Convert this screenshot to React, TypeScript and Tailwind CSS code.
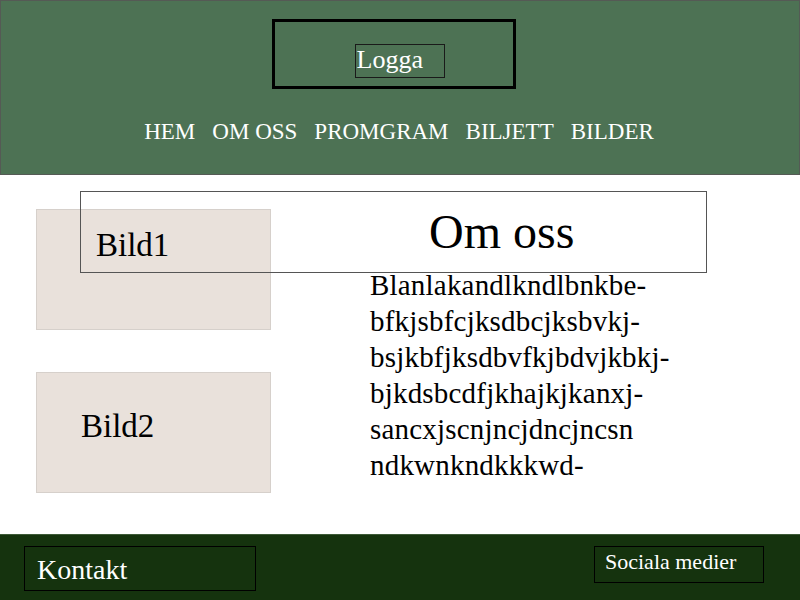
const serif = { fontFamily: '"Liberation Serif", "Times New Roman", serif' };

const navItems = ["HEM", "OM OSS", "PROMGRAM", "BILJETT", "BILDER"];

function Header() {
  return (
    <header className="h-[175px] bg-[#4d7254] border border-[#555a55] flex flex-col items-center">
      {/* logo frame */}
      <div className="mt-[18px] mr-[13px] w-[244px] h-[70px] border-[3px] border-black flex justify-center pt-[22px] pl-[12px]">
        <div className="w-[90px] h-[34px] border border-[#1a1a1a] text-white text-[26px] leading-[30px] pl-[1px]">
          Logga
        </div>
      </div>
      <nav className="mt-[28px] flex gap-[17px] text-white text-[23px] leading-[30px] ml-[-2px]">
        {navItems.map((item) => (
          <span key={item}>{item}</span>
        ))}
      </nav>
    </header>
  );
}

function Picture({ label, className }: { label: string; className: string }) {
  return (
    <div className="w-[235px] h-[121px] bg-[#e9e1db] border border-[#d6d0cb] text-black text-[33px] leading-[36px]">
      <div className={className}>{label}</div>
    </div>
  );
}

const lines = [
  "Blanlakandlkndlbnkbe-",
  "bfkjsbfcjksdbcjksbvkj-",
  "bsjkbfjksdbvfkjbdvjkbkj-",
  "bjkdsbcdfjkhajkjkanxj-",
  "sancxjscnjncjdncjncsn",
  "ndkwnkndkkkwd-",
];

function Main() {
  return (
    <main className="relative h-[359px] bg-white flex">
      <div className="pl-[36px] pt-[34px] flex flex-col gap-[42px]">
        <Picture label="Bild1" className="pl-[59px] pt-[17px]" />
        <Picture label="Bild2" className="pl-[44px] pt-[35px]" />
      </div>
      <div className="pl-[99px] pt-[92px] text-black text-[29px] leading-[36px] tracking-[0.2px]">
        {lines.map((l) => (
          <div key={l}>{l}</div>
        ))}
      </div>
      {/* heading frame overlaps the first picture */}
      <div className="absolute left-[80px] top-[16px] w-[627px] h-[82px] border border-[#555] flex items-center pl-[348px]">
        <h1 className="text-[48px] leading-[50px] text-black">Om oss</h1>
      </div>
    </main>
  );
}

function Footer() {
  return (
    <footer className="h-[66px] bg-[#15330e] border-t border-[#3d5a37] flex justify-between px-[24px] pt-[11px] pr-[36px]">
      <div className="w-[232px] h-[45px] border border-black text-white text-[28px] leading-[32px] pl-[12px] pt-[7px]">
        Kontakt
      </div>
      <div className="w-[170px] h-[37px] border border-black text-white text-[22px] leading-[26px] pl-[10px] pt-[2px]">
        Sociala medier
      </div>
    </footer>
  );
}

export default function App() {
  return (
    <div className="w-[800px] h-[600px] overflow-hidden bg-white" style={serif}>
      <Header />
      <Main />
      <Footer />
    </div>
  );
}
